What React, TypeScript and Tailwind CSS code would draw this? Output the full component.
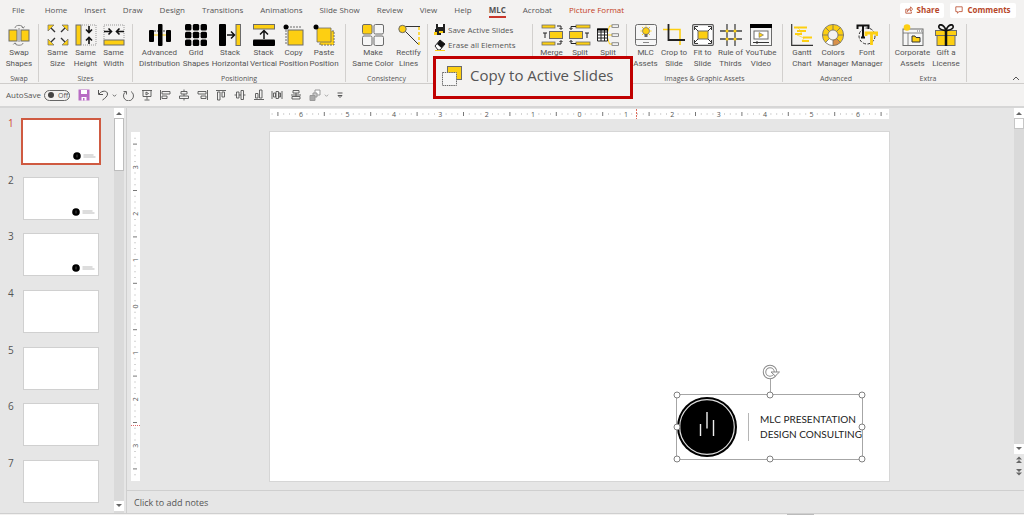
import type { ReactNode } from 'react';

const Y = '#fdcf12';
const G = '#6b6b6b';

const tabs = [
  'Home', 'Insert', 'Draw', 'Design', 'Transitions', 'Animations', 'Slide Show',
  'Review', 'View', 'Help', 'MLC', 'Acrobat', 'Picture Format',
];

type Tool = { label: string[]; icon: ReactNode; width: string };

const swapTools: Tool[] = [
  {
    label: ['Swap', 'Shapes'],
    width: 'w-[30px]',
    icon: (
      <>
        <rect x="1" y="6" width="8" height="11" fill={Y} stroke={G} />
        <rect x="13" y="6" width="8" height="11" fill={Y} stroke={G} />
        <path d="M7 4C7 .5 15 .5 15 4M13.5 2.500 15 4.200 16.800 2.500M15 19c0 3-8 3-8 0M5.300 20.500 7 18.800l1.700 1.700M11 4v14" fill="none" stroke={G} strokeWidth=".8" />
      </>
    ),
  },
];

const sizeTools: Tool[] = [
  {
    label: ['Same', 'Size'],
    width: 'w-7',
    icon: (
      <>
        <path d="m3 3 5 5M19 3l-5 5M3 19l5-5M19 19l-5-5" stroke="#333" strokeWidth="1.400" />
        <path d="M1 1h6L1 7zM21 1h-6l6 6zM1 21h6l-6-6zM21 21h-6l6-6z" fill={Y} stroke={G} strokeWidth=".7" />
      </>
    ),
  },
  {
    label: ['Same', 'Height'],
    width: 'w-7',
    icon: (
      <>
        <rect x="1" y="1" width="5" height="20" fill={Y} stroke={G} />
        <path d="M7 1h14v20H7" fill="none" stroke="#999" strokeDasharray="1 1" />
        <path d="M14 2v6M11 5.500l3 3 3-3M14 20v-6M11 16.500l3-3 3 3" fill="none" stroke="#111" strokeWidth="1.600" />
      </>
    ),
  },
  {
    label: ['Same', 'Width'],
    width: 'w-7',
    icon: (
      <>
        <path d="M1 15V1h20v14" fill="none" stroke="#999" strokeDasharray="1 1" />
        <rect x="1" y="16" width="20" height="5" fill={Y} stroke={G} />
        <path d="M1 7.500h7M5.500 4.500l3 3-3 3M21 7.500h-7M16.500 4.500l-3 3 3 3" fill="none" stroke="#111" strokeWidth="1.600" />
      </>
    ),
  },
];

const positionTools: Tool[] = [
  {
    label: ['Advanced', 'Distribution'],
    width: 'w-[42px]',
    icon: (
      <>
        <path d="M5 11h12" stroke={Y} />
        <path d="M5 7h12" stroke="#444" strokeDasharray="2 1" />
        <rect x="0" y="6" width="5" height="12" rx="1" />
        <rect x="9" y="0" width="4.500" height="22" rx="1" />
        <rect x="17" y="6" width="5" height="12" rx="1" />
      </>
    ),
  },
  {
    label: ['Grid', 'Shapes'],
    width: 'w-[31px]',
    icon: (
      <>
        {[0, 7.8, 15.6].map((y) =>
          [0, 7.8, 15.6].map((x) => <rect key={`${x}-${y}`} x={x} y={y} width="6.400" height="6.400" rx="1.500" />),
        )}
      </>
    ),
  },
  {
    label: ['Stack', 'Horizontal'],
    width: 'w-[37px]',
    icon: (
      <>
        <rect x="0" y="0" width="7" height="22" rx="1" />
        <rect x="17" y=".5" width="4.500" height="21" fill={Y} stroke={G} />
        <path d="M8 11h7M12 7.500l3.500 3.500-3.500 3.500" fill="none" stroke="#111" strokeWidth="1.500" />
      </>
    ),
  },
  {
    label: ['Stack', 'Vertical'],
    width: 'w-[30px]',
    icon: (
      <>
        <rect x=".5" y=".5" width="21" height="4.500" fill={Y} stroke={G} />
        <rect x="0" y="15.500" width="22" height="6.500" rx="1" />
        <path d="M11 15V7M7 10.500l4-4 4 4" fill="none" stroke="#111" strokeWidth="1.500" />
      </>
    ),
  },
  {
    label: ['Copy', 'Position'],
    width: 'w-[30px]',
    icon: (
      <>
        <path d="M3 20V3h16" fill="none" stroke={G} strokeDasharray="2 1" />
        <rect x="5" y="6" width="15" height="15" fill={Y} stroke={G} />
        <circle cx="3" cy="3" r="2.500" />
      </>
    ),
  },
  {
    label: ['Paste', 'Position'],
    width: 'w-[31px]',
    icon: (
      <>
        <path d="M7 7h14v14H7z" fill={Y} stroke={G} strokeDasharray="2 1" />
        <path d="M4 4h14v14H4z" fill={Y} stroke={G} strokeWidth=".8" />
        <circle cx="3" cy="3" r="2.500" />
      </>
    ),
  },
];

const consistencyTools: Tool[] = [
  {
    label: ['Make', 'Same Color'],
    width: 'w-[44px]',
    icon: (
      <g fill="#f6f6f6" stroke={G}>
        <rect x=".5" y=".5" width="9.500" height="9.500" rx="1.500" fill={Y} />
        <rect x="12" y=".5" width="9.500" height="9.500" rx="1.500" />
        <rect x=".5" y="12" width="9.500" height="9.500" rx="1.500" />
        <rect x="12" y="12" width="9.500" height="9.500" rx="1.500" />
      </g>
    ),
  },
  {
    label: ['Rectify', 'Lines'],
    width: 'w-[27px]',
    icon: (
      <>
        <path d="M7 2.500h15M7 7l14 14" stroke="#333" />
        <path d="M21 3v18" stroke={Y} strokeWidth="1.500" strokeDasharray="3 2" />
        <circle cx="4.500" cy="5" r="3.700" fill={Y} stroke={G} />
      </>
    ),
  },
];

const splitTools: Tool[] = [
  {
    label: ['Merge'],
    width: 'w-[29px]',
    icon: (
      <>
        <rect x="1" y="1" width="13" height="3" fill={Y} stroke={G} strokeWidth=".8" />
        <rect x="1" y="18" width="13" height="3" fill={Y} stroke={G} strokeWidth=".8" />
        <rect x="8.500" y="7.500" width="13" height="7" fill={Y} stroke={G} />
        <path d="M2 9h4M4 9v5M16 2h4v3M16 20h4v-3M18.500 4l1.500 1.500L21.500 4M18.500 18l1.500-1.500 1.500 1.500" fill="none" stroke="#222" />
      </>
    ),
  },
  {
    label: ['Split'],
    width: 'w-7',
    icon: (
      <>
        <rect x="7" y="1" width="14" height="3" fill={Y} stroke={G} strokeWidth=".8" />
        <rect x="7" y="18" width="14" height="3" fill={Y} stroke={G} strokeWidth=".8" />
        <rect x=".5" y="7.500" width="13" height="7" fill={Y} stroke={G} />
        <path d="M16 9h4M18 9v5M7 2.500H2v3M7 19.500H2v-3M.5 4 2 5.500 3.500 4M.5 18 2 16.500 3.500 18" fill="none" stroke="#222" />
      </>
    ),
  },
  {
    label: ['Split'],
    width: 'w-7',
    icon: (
      <>
        <path d="M10 10 12.500 2H16M10 11h5M10 12l2.500 8H16" fill="none" stroke={Y} />
        <path d="M.5 5h10v12H.500zM.5 8h10M.5 11h10M.5 14h10M4 5v12M7.500 5v12" fill="#fff" stroke="#222" />
        <path d="M0 4.500h11v2H0z" />
        <g fill="#fff" stroke={G} strokeWidth=".8">
          <rect x="15" y=".8" width="6.500" height="2.500" />
          <rect x="15" y="9.800" width="6.500" height="2.500" />
          <rect x="15" y="18.800" width="6.500" height="2.500" />
        </g>
      </>
    ),
  },
];

const imageTools: Tool[] = [
  {
    label: ['MLC', 'Assets'],
    width: 'w-7',
    icon: (
      <>
        <rect x=".5" y=".5" width="21" height="21" rx="2" fill="#f6f6f6" stroke={G} />
        <path d="M1 15.500h20M8 18.500h6" stroke={G} strokeWidth=".8" />
        <circle cx="11" cy="7" r="3.500" fill={Y} stroke={G} strokeWidth=".7" />
        <path d="M9.500 10h3v3h-3z" fill={G} />
        <path d="M11 1.500v1.200M5.500 7h1.300M15.200 7h1.300M7 3l1 1M15 3l-1 1M7 11l1-1M15 11l-1-1" stroke={Y} />
      </>
    ),
  },
  {
    label: ['Crop to', 'Slide'],
    width: 'w-[29px]',
    icon: (
      <>
        <path d="M0 5.500h17V21" fill="none" stroke={Y} strokeWidth="1.600" />
        <path d="M5.500 0v16H22" fill="none" stroke="#222" strokeWidth="1.800" />
      </>
    ),
  },
  {
    label: ['Fit to', 'Slide'],
    width: 'w-7',
    icon: (
      <>
        <rect x=".7" y=".7" width="20.600" height="20.600" rx="1" fill="#fff" stroke="#555" strokeWidth="1.200" />
        <rect x="6" y="7" width="10" height="8" fill={Y} stroke={G} />
        <path d="m6 7-4-4M16 7l4-4M6 15l-4 4M16 15l4 4M2.500 6V2.500H6M16 2.500h3.500V6M2.500 16v3.500H6M16 19.500h3.500V16" fill="none" stroke="#222" strokeWidth=".9" />
      </>
    ),
  },
  {
    label: ['Rule of', 'Thirds'],
    width: 'w-7',
    icon: (
      <>
        <path d="M7 0v22M15 0v22M0 7h22M0 15h22" stroke="#444" strokeWidth="1.300" />
        <g fill={Y}>
          <circle cx="7" cy="7" r="1.500" />
          <circle cx="15" cy="7" r="1.500" />
          <circle cx="7" cy="15" r="1.500" />
          <circle cx="15" cy="15" r="1.500" />
        </g>
      </>
    ),
  },
  {
    label: ['YouTube', 'Video'],
    width: 'w-[33px]',
    icon: (
      <>
        <rect x=".5" y=".5" width="21" height="21" fill="#f6f6f6" stroke={G} />
        <path d="M0 0h22v4H0z" />
        <rect x="4" y="7" width="14" height="8" fill="#fff" stroke={G} />
        <path d="m9 8.500 4.500 2.500L9 13.500z" fill={Y} stroke={G} strokeWidth=".6" />
        <path d="M3 18.500h16M7 17v3" stroke="#333" />
      </>
    ),
  },
];

const advancedTools: Tool[] = [
  {
    label: ['Gantt', 'Chart'],
    width: 'w-7',
    icon: (
      <>
        <path d="M.7 0v21.300H22" fill="none" stroke="#333" strokeWidth="1.200" />
        <path d="M3 3.500h13M6 7h9M4 10h7M12 13.500h9M11 17h7" stroke={Y} strokeWidth="1.800" />
        <path d="m7 4 4 4-5 3 7 3-2 3" fill="none" stroke={Y} strokeWidth=".6" />
      </>
    ),
  },
  {
    label: ['Colors', 'Manager'],
    width: 'w-[34px]',
    icon: (
      <>
        <circle cx="11" cy="11" r="7.800" fill="none" stroke={Y} strokeWidth="5.500" />
        <path d="M11 18.800A7.800 7.800 0 0 1 5.500 16.500" fill="none" stroke="#fff" strokeWidth="5.500" />
        <path d="M11 18.800A7.800 7.800 0 0 0 16.500 16.500" fill="none" stroke="#d9914a" strokeWidth="5.500" />
        <g fill="none" stroke={G} strokeWidth=".8">
          <circle cx="11" cy="11" r="10.600" />
          <circle cx="11" cy="11" r="5" />
          <path d="M11 .4V6M11 16v5.600M.4 11H6M16 11h5.600M3.500 3.500l4 4M18.500 3.500l-4 4M3.500 18.500l4-4M18.500 18.500l-4-4" />
        </g>
      </>
    ),
  },
  {
    label: ['Font', 'Manager'],
    width: 'w-[34px]',
    icon: (
      <>
        <circle cx="11" cy="12" r="8" fill="none" stroke="#333" strokeDasharray="3 1.500" />
        <path d="M1.500 5V1.500h11V5M7 1.500v12M5 13.500h4" fill="none" stroke="#111" strokeWidth="2" />
        <path d="M10 12V9h11v3M15.500 9v12" fill="none" stroke={Y} strokeWidth="2.800" />
      </>
    ),
  },
];

const extraTools: Tool[] = [
  {
    label: ['Corporate', 'Assets'],
    width: 'w-9',
    icon: (
      <>
        <rect x="1" y="5" width="20" height="16.500" fill="#f6f6f6" stroke={G} />
        <path d="M1 9h20M6 9v12" stroke={G} strokeWidth=".8" />
        <path d="M10 12h3l1 1.500h4V18h-8z" fill={Y} stroke="#333" />
        <path d="M15 7h5" stroke={G} strokeDasharray="1 1" />
        <circle cx="5" cy="3.500" r="3.300" fill={Y} />
      </>
    ),
  },
  {
    label: ['Gift a', 'License'],
    width: 'w-[31px]',
    icon: (
      <>
        <rect x="2" y="11" width="18" height="10.500" fill={Y} stroke={G} />
        <rect x=".5" y="6.500" width="21" height="5" fill={Y} stroke={G} />
        <path d="M11 7v15" stroke="#111" strokeWidth="2.500" />
        <path d="M11 6C8-1 3 0 4 3.500 5 6 8 6 11 6.500 14 6 17 6 18 3.500 19 0 14-1 11 6z" fill="none" stroke="#111" strokeWidth="1.700" />
      </>
    ),
  },
];

function ToolButton({ tool }: { tool: Tool }) {
  return (
    <button type="button" className={`flex shrink-0 flex-col items-center whitespace-nowrap leading-[11px] ${tool.width}`}>
      <svg viewBox="0 0 22 22" className="mb-px size-[22px]">{tool.icon}</svg>
      {tool.label.map((line) => <span key={line}>{line}</span>)}
    </button>
  );
}

function Group({ name, tools, className }: { name?: string; tools: Tool[]; className: string }) {
  return (
    <section className={`flex shrink-0 flex-col items-center justify-between border-r border-[#d2d0ce] font-[Roboto,sans-serif] ${className}`}>
      <div className="flex">
        {tools.map((tool, i) => <ToolButton key={i} tool={tool} />)}
      </div>
      {name && <h2 className="font-['Open_Sans',sans-serif] text-[7px] leading-[7px]">{name}</h2>}
    </section>
  );
}

const quickIcons: { name: string; path: string }[] = [
  { name: 'Redo', path: 'M4 2.500A5 5 0 1 0 9 2.500M1.500 2.500H4.500V5.500' },
  { name: 'From Beginning', path: 'M1 1.500h10M2 1.500v6h8v-6M6 7.500v3M3.500 11h5M5 3v3l2.500-1.500z' },
  { name: 'Align Left', path: 'M1.500 1v10M3 2.500h8v2.500H3zM3 7h5v2.500H3z' },
  { name: 'Align Center', path: 'M6 .5v2M6 5v2M6 9.500v2M3 2.500h6V5H3zM1.500 7h9v2.500h-9z' },
  { name: 'Align Right', path: 'M10.500 1v10M1 2.500h8v2.500H1zM4 7h5v2.500H4z' },
  { name: 'Align Top', path: 'M1 1.500h10M2.500 3H5v8H2.500zM7 3h2.500v5H7z' },
  { name: 'Align Middle', path: 'M.5 6h2M5 6h2M9.500 6h2M2.500 3H5v6H2.500zM7 1.500h2.500v9H7z' },
  { name: 'Align Bottom', path: 'M1 10.500h10M2.500 4.500H5V9H2.500zM6.500 1H9v8H6.500z' },
  { name: 'Distribute Horizontally', path: 'M1 2v8M11 2v8M2.500 4h2v4h-2zM5 2.500h2.500v7H5zM8 4h1.500v4H8z' },
  { name: 'Distribute Vertically', path: 'M1 6h10M3 1.500h6V4H3zM2 7.500h8V10H2zM6 4v3.500' },
];

function RulerMarks({ count, vertical }: { count: number; vertical?: boolean }) {
  const pitch = 46.4;
  const length = vertical ? 349 : 619;
  const marks: ReactNode[] = [];
  for (let i = -count * 8 - 5; i <= count * 8 + 5; i++) {
    const at = length / 2 + (i * pitch) / 8;
    if (at < 2 || at > length - 2) continue;
    if (i % 8 === 0) {
      marks.push(
        <text key={i} x={at} y="7.500" textAnchor="middle" fontSize="7" fill="#555">{Math.abs(i / 8)}</text>,
      );
    } else {
      const half = i % 4 === 0;
      marks.push(
        <path key={i} d={half ? `M${at - 0.5} 3h1v4h-1z` : `M${at - 0.5} 4.500h1v1h-1z`} fill={half ? '#777' : '#aaa'} />,
      );
    }
  }
  return vertical ? (
    <svg viewBox="0 0 9 349" className="h-full w-full">
      <g transform="translate(-1 349) rotate(-90)">{marks}</g>
      <path d="M0 293.500h9" stroke="#d66" strokeDasharray="1 1" />
    </svg>
  ) : (
    <svg viewBox="0 0 619 10" className="h-full w-full">
      {marks}
      <path d="M366.500 0v10" stroke="#e06a5a" strokeDasharray="2 1" />
    </svg>
  );
}

function ScrollArrow({ label, path }: { label: string; path: string }) {
  return (
    <button type="button" aria-label={label} className="flex h-[10px] w-full items-center justify-center bg-white">
      <svg viewBox="0 0 6 6" className="size-[6px]"><path d={path} fill="#666" /></svg>
    </button>
  );
}

const handles = [
  'left-0 top-0', 'left-1/2 top-0', 'left-full top-0',
  'left-0 top-1/2', 'left-full top-1/2',
  'left-0 top-full', 'left-1/2 top-full', 'left-full top-full',
];

function LogoPicture() {
  return (
    <div className="absolute left-[65.6%] top-[75.1%] flex h-[19%] w-[30.2%] items-center border border-[#a6a6a6]">
      <svg viewBox="0 0 60 60" className="size-[60px] shrink-0">
        <circle cx="30" cy="30" r="30" />
        <circle cx="30" cy="30" r="27.300" fill="none" stroke="#ddd" strokeWidth="1.200" />
        <path d="M23.500 27v12M30 15v16.500M36.500 23v16" stroke="#eee" strokeWidth="1.400" />
      </svg>
      <div className="ml-[11px] h-7 w-px shrink-0 bg-[#b5b5b5]" />
      <p className="ml-[11px] whitespace-nowrap font-[Lato,sans-serif] text-[10px] leading-[15px] text-[#222]">
        MLC PRESENTATION<br />DESIGN CONSULTING
      </p>
      <span className="absolute -top-4 left-1/2 h-4 w-px bg-[#a6a6a6]" />
      <svg viewBox="0 0 18 18" className="absolute -top-8 left-1/2 size-[18px] -translate-x-2">
        <circle cx="8" cy="9" r="5.500" fill="none" stroke="#8a8a8a" strokeWidth="3.500" />
        <circle cx="8" cy="9" r="5.500" fill="none" stroke="#fff" strokeWidth="1.500" />
        <path d="M9 9h8.500l-4.200 4z" fill="#fff" stroke="#8a8a8a" />
      </svg>
      {handles.map((place) => (
        <span key={place} className={`absolute size-[7px] -translate-x-1/2 -translate-y-1/2 rounded-full border border-[#808080] bg-white ${place}`} />
      ))}
    </div>
  );
}

export default function App() {
  return (
    <div className="flex min-h-screen flex-col bg-[#e6e6e6] font-['Open_Sans','Noto_Sans',sans-serif] text-[8px] text-[#555]">
      <header className="bg-[#f3f2f1]">
        <div className="flex h-5 items-center justify-between pl-3 pr-2">
          <nav className="flex items-center whitespace-nowrap">
            <a href="#file" className="mr-5">File</a>
            <div className="flex gap-[17px]">
              {tabs.map((tab) => (
                <a
                  key={tab}
                  href={`#${tab}`}
                  className={
                    tab === 'MLC'
                      ? 'border-b-2 border-[#c8372d] pt-0.5 font-bold'
                      : tab === 'Picture Format'
                        ? 'border-b-2 border-transparent pt-0.5 text-[#c43e1c]'
                        : 'border-b-2 border-transparent pt-0.5'
                  }
                >
                  {tab}
                </a>
              ))}
            </div>
          </nav>
          <div className="flex gap-[6px] font-bold text-[#b7472a]">
            <button type="button" className="flex h-[15px] w-[44px] items-center justify-center gap-1 rounded-xs bg-white">
              <svg viewBox="0 0 10 10" className="size-2" fill="none" stroke="currentColor">
                <path d="M3 4H1v5h7V7M3 7c0-3 2-4 4-4V1l2.500 3L7 6.500v-2C5 4.500 4 5 3 7z" />
              </svg>
              Share
            </button>
            <button type="button" className="flex h-[15px] w-[66px] items-center justify-center gap-1 rounded-xs bg-white">
              <svg viewBox="0 0 10 10" className="size-2" fill="none" stroke="currentColor">
                <path d="M1 1h8v6H5L3 9V7H1z" />
              </svg>
              Comments
            </button>
          </div>
        </div>

        <div className="relative flex h-16 border-b border-[#cfcdcb] pb-px pt-1">
          <Group name="Swap" tools={swapTools} className="w-[39px]" />
          <Group name="Sizes" tools={sizeTools} className="w-[94px]" />
          <Group name="Positioning" tools={positionTools} className="w-[213px]" />
          <Group name="Consistency" tools={consistencyTools} className="w-[82px]" />
          <section className="relative flex w-[105px] shrink-0 flex-col border-r border-[#d2d0ce] pl-[6px]">
            <button type="button" className="flex h-3 items-center gap-0.5 whitespace-nowrap">
              <svg viewBox="0 0 12 12" className="size-3">
                <path d="M2 0h9v9H2z" fill="#222" />
                <path d="M4 0h5v3H4z" fill="#fff" />
                <path d="M1 5h6v6H1z" fill="#222" />
                <path d="M0 8h3v3H0zM5 7h4v2H5z" fill={Y} />
              </svg>
              Save Active Slides
            </button>
            <button type="button" className="mt-[3px] flex h-3 items-center gap-0.5 whitespace-nowrap">
              <svg viewBox="0 0 12 12" className="size-3">
                <path d="M1 7 6 1l5 4-5 6H4z" fill="#fff" stroke="#222" />
                <path d="m3 5 3-4 5 4-3.500 4z" fill="#111" />
                <path d="M1 11.500h10" stroke={Y} />
              </svg>
              Erase all Elements
            </button>
            <button
              type="button"
              className="absolute left-[5px] top-8 z-10 flex h-[43px] w-[200px] items-center gap-2 whitespace-nowrap border-3 border-[#c00000] bg-[#f3f2f1] pb-1 pl-1.5 text-[15px]"
            >
              <svg viewBox="0 0 20 20" className="size-5 shrink-0">
                <rect x="5.500" y=".5" width="14" height="13" fill={Y} stroke={G} />
                <rect x=".5" y="6.500" width="14" height="13" fill="#f6f6f6" stroke={G} strokeDasharray="1.500 .7" />
              </svg>
              Copy to Active Slides
            </button>
          </section>
          <Group tools={splitTools} className="w-[94px]" />
          <Group name="Images &amp; Graphic Assets" tools={imageTools} className="w-[156px]" />
          <Group name="Advanced" tools={advancedTools} className="w-[107px]" />
          <Group name="Extra" tools={extraTools} className="w-[77px]" />
          <button type="button" aria-label="Collapse the Ribbon" className="ml-auto mr-1 self-end">
            <svg viewBox="0 0 8 8" className="size-2"><path d="m1 6 3-3 3 3" fill="none" stroke="#555" /></svg>
          </button>
        </div>

        <div className="flex h-6 items-center border-b-2 border-[#d6d6d6] pl-1.5">
          <label className="flex items-center gap-[3px]">
            AutoSave
            <input type="checkbox" className="peer sr-only" />
            <span className="flex h-[11px] w-[26px] items-center gap-1 rounded-full border border-[#666] pl-[3px] text-[7px] leading-[9px]">
              <span className="size-[6px] rounded-full bg-[#444]" />
              Off
            </span>
          </label>
          <button type="button" aria-label="Save" className="ml-2">
            <svg viewBox="0 0 12 12" className="size-3">
              <path d="M.5.5h11v11H.500z" fill="#b86cc4" />
              <path d="M3 1h6v4H3zM3.500 8h5v3.500h-5z" fill="#fff" />
              <path d="M5 9h1.500v2.500H5z" fill="#b86cc4" />
            </svg>
          </button>
          <button type="button" aria-label="Undo" className="ml-[7px] flex items-center gap-[3px]">
            <svg viewBox="0 0 12 12" className="size-3" fill="none" stroke="#555">
              <path d="M1.500 1v4.500H6M2 5C5 1 10.500 1.500 10.500 5c0 2-2 4-5 6" />
            </svg>
            <svg viewBox="0 0 6 6" className="size-[5px]" fill="none" stroke="#555"><path d="m1 2 2 2 2-2" /></svg>
          </button>
          <div className="ml-[5px] flex w-[199px] items-center justify-between">
            {quickIcons.map((icon) => (
              <button key={icon.name} type="button" aria-label={icon.name}>
                <svg viewBox="0 0 12 12" className="size-3" fill="none" stroke="#555" strokeWidth=".9"><path d={icon.path} /></svg>
              </button>
            ))}
            <button type="button" aria-label="Arrange">
              <svg viewBox="0 0 12 12" className="size-3" stroke="#999">
                <path d="M6 1h5v5H6z" fill="#fff" />
                <path d="M4 4h4v4H4z" fill="#ccc" />
                <path d="M1 6.500h5v5H1z" fill="#aaa" />
              </svg>
            </button>
          </div>
          <svg viewBox="0 0 6 6" className="ml-[3px] size-[5px]" fill="none" stroke="#999"><path d="m1 2 2 2 2-2" /></svg>
          <button type="button" aria-label="Customize Quick Access Toolbar" className="ml-[7px]">
            <svg viewBox="0 0 8 8" className="size-2" fill="none" stroke="#555"><path d="M1.500 2h5M2 4.500h4L4 6.500z" /></svg>
          </button>
        </div>
      </header>

      <main className="flex flex-1">
        <aside className="flex w-[127px] shrink-0 border-r border-[#cfcfcf]">
          <ol className="flex flex-1 flex-col justify-between pb-[10px] pl-2 pt-3">
            {[1, 2, 3, 4, 5, 6, 7].map((n) => (
              <li key={n} className="flex items-start gap-[9px]">
                <span className={n === 1 ? 'w-1.5 text-[10px] leading-[7px] text-[#d04a30]' : 'w-1.5 text-[10px] leading-[7px]'}>{n}</span>
                <button
                  type="button"
                  aria-label={`Slide ${n}`}
                  className={
                    n === 1
                      ? 'flex h-[43px] w-[76px] items-end justify-end bg-white outline-2 outline-[#cf5a41]'
                      : 'flex h-[43px] w-[76px] items-end justify-end border border-[#d0d0d0] bg-white'
                  }
                >
                  {n < 4 && (
                    <svg viewBox="0 0 26 11" className="h-[11px] w-[26px]">
                      <circle cx="4" cy="4" r="3.800" />
                      <path d="M4 2.500v3" stroke="#777" strokeWidth=".6" />
                      <path d="M10.500 3h10M10.500 5h12" stroke="#aaa" strokeWidth=".8" />
                    </svg>
                  )}
                </button>
              </li>
            ))}
          </ol>
          <div className="mr-0.5 flex w-[10px] flex-col bg-[#dadada] pb-0.5">
            <ScrollArrow label="Scroll slides up" path="M0 5h6L3 2z" />
            <div className="h-[53px] border border-[#bdbdbd] bg-white" />
            <div className="flex-1" />
            <ScrollArrow label="Scroll slides down" path="M0 1h6L3 4z" />
          </div>
        </aside>

        <div className="flex flex-1 flex-col">
          <div className="flex flex-1">
            <div className="flex-1 pl-1">
              <div className="ml-[139px] mr-[125px] mt-px h-[10px] bg-white">
                <RulerMarks count={6} />
              </div>
              <div className="mt-[13px] flex pb-[9px]">
                <div className="flex w-[9px] shrink-0 bg-white">
                  <RulerMarks count={3} vertical />
                </div>
                <div className="relative ml-[130px] mr-[125px] aspect-[619/349] flex-1 bg-white outline outline-[#d6d6d6]">
                  <LogoPicture />
                </div>
              </div>
            </div>
            <div className="flex w-[10px] flex-col items-center bg-[#e6e6e6]">
              <ScrollArrow label="Scroll up" path="M0 5h6L3 2z" />
              <div className="h-[11px] w-full border border-[#c6c6c6] bg-white" />
              <div className="w-full flex-1 bg-[#dadada]" />
              <ScrollArrow label="Scroll down" path="M0 1h6L3 4z" />
              <button type="button" aria-label="Previous Slide" className="mt-0.5">
                <svg viewBox="0 0 6 8" className="h-2 w-1.5" fill="#666"><path d="M0 3.500 3 .5l3 3zM0 7l3-3 3 3z" /></svg>
              </button>
              <button type="button" aria-label="Next Slide" className="mb-[14px] mt-1">
                <svg viewBox="0 0 6 8" className="h-2 w-1.5" fill="#666"><path d="m0 1 3 3 3-3zM0 4.500l3 3 3-3z" /></svg>
              </button>
            </div>
          </div>
          <div className="h-[23px] border-t border-[#cfcfcf]">
            <input
              aria-label="Notes"
              placeholder="Click to add notes"
              className="block h-[22px] w-full bg-transparent pl-[7px] text-[9px] outline-none placeholder:text-[#555]"
            />
          </div>
        </div>
      </main>

      <footer className="flex h-0.5 justify-end border-t border-[#cfcfcf] bg-[#f3f2f1]">
        <div className="mr-[210px] w-[27px] bg-[#bbb]" />
      </footer>
    </div>
  );
}
